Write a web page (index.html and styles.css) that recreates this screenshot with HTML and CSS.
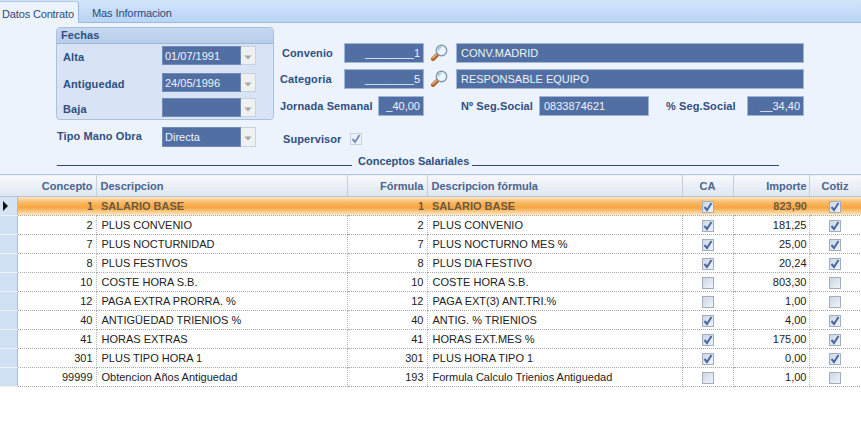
FILE: index.html
```html
<!DOCTYPE html>
<html lang="es">
<head>
<meta charset="utf-8">
<title>Datos Contrato</title>
<link rel="stylesheet" href="styles.css">
</head>
<body>
<svg class="defs" width="0" height="0" aria-hidden="true">
  <symbol id="check" viewBox="0 0 12 12">
    <path d="M2.5 6 L5 9 L9.5 2" fill="none" stroke="#4a69a2" stroke-width="2"/>
  </symbol>
  <symbol id="lens" viewBox="0 0 18 18">
    <path d="M7.5 10.5 L3 15" stroke="#b0622a" stroke-width="4" stroke-linecap="round"/>
    <path d="M7 10 L2.5 14.5" stroke="#eeb98a" stroke-width="1.2"/>
    <circle cx="11.5" cy="6.5" r="5.2" fill="#eaf6fd" stroke="#8298ad" stroke-width="1.4"/>
    <path d="M8.3 6.5 A3.4 3.4 0 0 1 11.5 3.2" fill="none" stroke="#a5c6e0" stroke-width="1.5"/>
  </symbol>
  <symbol id="arrow" viewBox="0 0 14 20">
    <path d="M3.5 8.5 H10.5 L7 12.5 Z" fill="#a9a69e"/>
  </symbol>
</svg>

<nav class="tabs">
  <div class="tab active">Datos Contrato</div>
  <div class="tab">Mas Informacion</div>
</nav>

<section class="form">
  <div class="top">
    <div class="left">
      <div class="group">
        <div class="group-title">Fechas</div>
        <div class="group-row r1"><span class="label">Alta</span><span class="combo"><span class="field">01/07/1991</span><span class="btn"><svg width="14" height="20"><use href="#arrow"/></svg></span></span></div>
        <div class="group-row r2"><span class="label">Antiguedad</span><span class="combo"><span class="field">24/05/1996</span><span class="btn"><svg width="14" height="20"><use href="#arrow"/></svg></span></span></div>
        <div class="group-row r3"><span class="label">Baja</span><span class="combo"><span class="field"></span><span class="btn"><svg width="14" height="20"><use href="#arrow"/></svg></span></span></div>
      </div>
      <div class="tipo"><span class="label">Tipo Mano Obra</span><span class="combo"><span class="field">Directa</span><span class="btn"><svg width="14" height="20"><use href="#arrow"/></svg></span></span></div>
    </div>

    <div class="right">
      <div class="row row-a">
        <span class="label l-conv">Convenio</span>
        <span class="input num w80">________1</span>
        <svg class="lens" width="18" height="18"><use href="#lens"/></svg>
        <span class="input w348">CONV.MADRID</span>
      </div>
      <div class="row row-b">
        <span class="label l-cat">Categoria</span>
        <span class="input num w80">________5</span>
        <svg class="lens" width="18" height="18"><use href="#lens"/></svg>
        <span class="input w348">RESPONSABLE EQUIPO</span>
      </div>
      <div class="row row-c">
        <span class="label l-jor">Jornada Semanal</span>
        <span class="input num w46">_40,00</span>
        <span class="label l-seg">Nº Seg.Social</span>
        <span class="input w110">0833874621</span>
        <span class="label l-pct">% Seg.Social</span>
        <span class="input num w57">__34,40</span>
      </div>
      <div class="row row-d">
        <span class="label l-sup">Supervisor</span>
        <span class="box disabled"><svg width="12" height="12"><use href="#check"/></svg></span>
      </div>
    </div>
  </div>
  <div class="divider">
    <span class="rule r-left"></span>
    <span class="label d-label">Conceptos Salariales</span>
    <span class="rule r-right"></span>
  </div>
</section>

<table class="grid">
  <colgroup>
    <col class="c0"><col class="c1"><col class="c2"><col class="c3"><col class="c4"><col class="c5"><col class="c6"><col class="c7">
  </colgroup>
  <thead>
    <tr>
      <th class="ind"></th><th class="n">Concepto</th><th class="t">Descripcion</th><th class="n">Fórmula</th><th class="t">Descripcion fórmula</th><th class="m">CA</th><th class="n">Importe</th><th class="m">Cotiz</th>
    </tr>
  </thead>
  <tbody>
    <tr class="sel"><td class="ind"><span class="tri"></span></td><td class="n">1</td><td class="t">SALARIO BASE</td><td class="n">1</td><td class="t">SALARIO BASE</td><td class="m"><span class="box"><svg width="12" height="12"><use href="#check"/></svg></span></td><td class="n">823,90</td><td class="m"><span class="box"><svg width="12" height="12"><use href="#check"/></svg></span></td></tr>
    <tr><td class="ind"></td><td class="n">2</td><td class="t">PLUS CONVENIO</td><td class="n">2</td><td class="t">PLUS CONVENIO</td><td class="m"><span class="box"><svg width="12" height="12"><use href="#check"/></svg></span></td><td class="n">181,25</td><td class="m"><span class="box"><svg width="12" height="12"><use href="#check"/></svg></span></td></tr>
    <tr><td class="ind"></td><td class="n">7</td><td class="t">PLUS NOCTURNIDAD</td><td class="n">7</td><td class="t">PLUS NOCTURNO MES %</td><td class="m"><span class="box"><svg width="12" height="12"><use href="#check"/></svg></span></td><td class="n">25,00</td><td class="m"><span class="box"><svg width="12" height="12"><use href="#check"/></svg></span></td></tr>
    <tr><td class="ind"></td><td class="n">8</td><td class="t">PLUS FESTIVOS</td><td class="n">8</td><td class="t">PLUS DIA FESTIVO</td><td class="m"><span class="box"><svg width="12" height="12"><use href="#check"/></svg></span></td><td class="n">20,24</td><td class="m"><span class="box"><svg width="12" height="12"><use href="#check"/></svg></span></td></tr>
    <tr><td class="ind"></td><td class="n">10</td><td class="t">COSTE HORA S.B.</td><td class="n">10</td><td class="t">COSTE HORA S.B.</td><td class="m"><span class="box"></span></td><td class="n">803,30</td><td class="m"><span class="box"></span></td></tr>
    <tr><td class="ind"></td><td class="n">12</td><td class="t">PAGA EXTRA PRORRA. %</td><td class="n">12</td><td class="t">PAGA EXT(3) ANT.TRI.%</td><td class="m"><span class="box"></span></td><td class="n">1,00</td><td class="m"><span class="box"></span></td></tr>
    <tr><td class="ind"></td><td class="n">40</td><td class="t">ANTIGÜEDAD TRIENIOS %</td><td class="n">40</td><td class="t">ANTIG. % TRIENIOS</td><td class="m"><span class="box"><svg width="12" height="12"><use href="#check"/></svg></span></td><td class="n">4,00</td><td class="m"><span class="box"><svg width="12" height="12"><use href="#check"/></svg></span></td></tr>
    <tr><td class="ind"></td><td class="n">41</td><td class="t">HORAS EXTRAS</td><td class="n">41</td><td class="t">HORAS EXT.MES %</td><td class="m"><span class="box"><svg width="12" height="12"><use href="#check"/></svg></span></td><td class="n">175,00</td><td class="m"><span class="box"><svg width="12" height="12"><use href="#check"/></svg></span></td></tr>
    <tr><td class="ind"></td><td class="n">301</td><td class="t">PLUS TIPO HORA 1</td><td class="n">301</td><td class="t">PLUS HORA TIPO 1</td><td class="m"><span class="box"><svg width="12" height="12"><use href="#check"/></svg></span></td><td class="n">0,00</td><td class="m"><span class="box"><svg width="12" height="12"><use href="#check"/></svg></span></td></tr>
    <tr><td class="ind"></td><td class="n">99999</td><td class="t">Obtencion Años Antiguedad</td><td class="n">193</td><td class="t">Formula Calculo Trienios Antiguedad</td><td class="m"><span class="box"></span></td><td class="n">1,00</td><td class="m"><span class="box"></span></td></tr>
  </tbody>
</table>
</body>
</html>
```

FILE: styles.css
```css
* { box-sizing: border-box; }
html, body { margin: 0; padding: 0; }
body {
  width: 861px;
  height: 421px;
  overflow: hidden;
  background: #fff;
  font-family: "Liberation Sans", Arial, sans-serif;
  font-size: 11px;
  color: #222;
}
.defs { position: absolute; }

/* tabs */
.tabs {
  height: 23px;
  padding-top: 1px;
  display: flex;
  background: linear-gradient(#d2e4fb, #b9d4f6);
  border-bottom: 1px solid #9db8dc;
}
.tab {
  padding: 6px 0 0 13px;
  font-size: 11px;
  color: #2c4a78;
  width: 98px;
  white-space: nowrap;
  letter-spacing: -0.1px;
}
.tab.active {
  width: 79px;
  height: 22px;
  padding: 6px 0 0 2px;
  color: #2c4a78;
  background: #edf3fd;
  border-right: 1px solid #9db8dc;
  border-top: 1px solid #b4cbe8;
  border-radius: 0 3px 0 0;
  letter-spacing: -0.15px;
}

/* form */
.form {
  height: 151px;
  background: #edf3fd;
  padding: 4px 0 0 56px;
}
.top { display: flex; height: 127px; }
.left { width: 224px; }
.label { color: #2f4f82; font-weight: bold; letter-spacing: 0.1px; white-space: nowrap; }

.group {
  width: 218px;
  height: 93px;
  border: 1px solid #a9c0df;
  border-radius: 4px;
  background: #d8e4f5;
}
.group-title {
  height: 16px;
  padding: 1px 0 0 4px;
  font-weight: bold;
  color: #2f4f82;
  background: linear-gradient(#c6d8f0, #b8cde9);
  border-bottom: 1px solid #9db6d8;
  border-radius: 3px 3px 0 0;
  letter-spacing: 0.1px;
}
.group-row { display: flex; align-items: center; height: 19px; padding-left: 6px; }
.group-row .label { width: 99px; padding-top: 3px; }
.r1 { margin-top: 2px; }
.r2 { margin-top: 8px; }
.r3 { margin-top: 6px; }

.combo { display: flex; height: 100%; overflow: hidden; }
.tipo .combo { height: 20px; }
.field {
  width: 79px;
  height: 100%;
  padding: 3px 0 0 2px;
  background: #526fa3;
  color: #eef3fb;
  border: 1px solid #6f8bb8;
}
.btn {
  width: 15px;
  height: 100%;
  background: #eef0f2;
  border: 1px solid #c9d2dd;
  border-left: 0;
  display: flex;
}

.tipo { display: flex; align-items: flex-start; margin-top: 7px; height: 20px; }
.tipo .label { width: 106px; padding: 3px 0 0 1px; }

.right { flex: none; }
.row { display: flex; align-items: center; height: 20px; }
.row-a { margin-top: 16px; }
.row-b { margin-top: 6px; }
.row-c { margin-top: 7px; }
.row-d { margin-top: 13px; }

.input {
  display: block;
  height: 100%;
  padding: 3px 4px 0;
  background: #526fa3;
  color: #eef3fb;
  border: 1px solid #9fb6d8;
  white-space: nowrap;
}
.num { text-align: right; padding-right: 3px; }
.w80 { width: 80px; }
.w46 { width: 46px; }
.w348 { width: 348px; }
.w110 { width: 110px; }
.w57 { width: 57px; }
.lens { margin: 0 8px 0 6px; flex: none; }

.l-conv { width: 64px; padding-left: 2px; }
.l-cat { width: 64px; }
.l-jor { width: 98px; }
.l-seg { width: 115px; padding-left: 37px; }
.l-pct { width: 98px; padding-left: 17px; }
.l-sup { width: 70px; padding-left: 3px; }

.box {
  display: inline-block;
  width: 12px;
  height: 12px;
  vertical-align: middle;
  background: linear-gradient(135deg, #cdd6e4, #f0f3f8);
  border: 1px solid #a0aec2;
  line-height: 0;
}
.box svg { display: block; margin: -1px; }
.box.disabled { background: #f1f3f6; border-color: #bcc5d0; opacity: .7; }

.divider { display: flex; align-items: center; height: 13px; }
.d-label { width: 114px; letter-spacing: 0; }
.rule { display: block; height: 1px; background: #2e4c7d; margin-top: 10px; }
.r-left { width: 295px; margin-left: 1px; margin-right: 6px; }
.r-right { width: 307px; }

/* grid */
.grid {
  width: 861px;
  table-layout: fixed;
  border-collapse: collapse;
  font-size: 11px;
}
.c0 { width: 17px; }
.c1 { width: 79px; }
.c2 { width: 251px; }
.c3 { width: 80px; }
.c4 { width: 255px; }
.c5 { width: 51px; }
.c6 { width: 76px; }
.c7 { width: 52px; }

.grid th {
  height: 22px;
  padding: 0 3px;
  font-weight: bold;
  color: #4a648f;
  background: linear-gradient(#f7f9fc, #dfe6f1);
  border-top: 1px solid #b5c3da;
  border-bottom: 1px solid #b5c3da;
  border-right: 1px solid #c4cfdf;
  white-space: nowrap;
}
.grid th.ind { border-right: 0; }
.grid td {
  height: 19px;
  padding: 0 3px;
  background: #fff;
  color: #222;
  border-bottom: 1px dotted #a8a8a8;
  border-right: 1px dotted #b5b5b5;
  white-space: nowrap;
  overflow: hidden;
}
.grid .n { text-align: right; }
.grid .t { text-align: left; padding-left: 5px; }
.grid .m { text-align: center; }
.grid th.t { padding-left: 4px; }
.grid tr > :nth-child(7) { padding-right: 2px; }
.grid td.ind {
  background: #cfe0f2;
  border-right: 1px solid #a8bdd8;
  border-bottom: 1px solid #eaf1f9;
  padding: 0 0 0 3px;
}
.tri {
  display: block;
  width: 0;
  height: 0;
  border-left: 5px solid #111;
  border-top: 5px solid transparent;
  border-bottom: 5px solid transparent;
}
.grid tr.sel td:not(.ind) {
  background: linear-gradient(#fde1b6 0, #f9bd6e 25%, #f6a440 55%, #fbd59c 85%, #fdeacb 100%);
  color: #6e5a3c;
  font-weight: bold;
  border-right-style: none;
}
.grid tr.sel td.ind { background: #d5e3f3; }
```
